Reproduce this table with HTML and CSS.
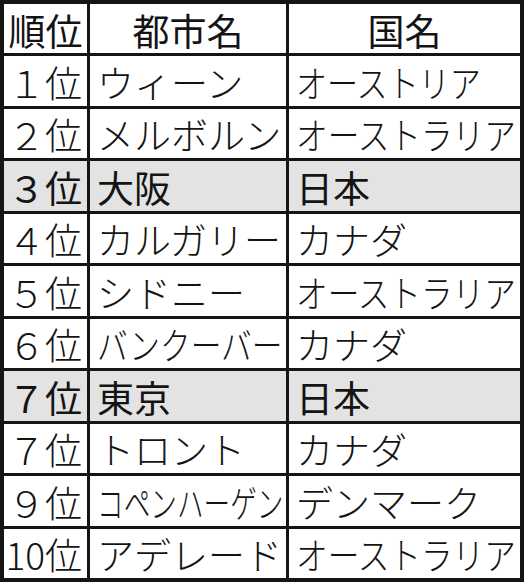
FILE: index.html
```html
<!DOCTYPE html>
<html lang="ja">
<head>
<meta charset="utf-8">
<title>都市ランキング</title>
<link rel="stylesheet" href="styles.css">
</head>
<body>
<div class="table">
  <div class="cell head rank-h">順位</div>
  <div class="cell head center">都市名</div>
  <div class="cell head center">国名</div>

  <div class="cell rank">１位</div>
  <div class="cell">ウィーン</div>
  <div class="cell"><span class="c84">オーストリア</span></div>

  <div class="cell rank">２位</div>
  <div class="cell">メルボルン</div>
  <div class="cell"><span class="c85">オーストラリア</span></div>

  <div class="cell rank hl">３位</div>
  <div class="cell hl">大阪</div>
  <div class="cell hl">日本</div>

  <div class="cell rank">４位</div>
  <div class="cell">カルガリー</div>
  <div class="cell">カナダ</div>

  <div class="cell rank">５位</div>
  <div class="cell">シドニー</div>
  <div class="cell"><span class="c85">オーストラリア</span></div>

  <div class="cell rank">６位</div>
  <div class="cell"><span class="c83">バンクーバー</span></div>
  <div class="cell">カナダ</div>

  <div class="cell rank hl">７位</div>
  <div class="cell hl">東京</div>
  <div class="cell hl">日本</div>

  <div class="cell rank">７位</div>
  <div class="cell">トロント</div>
  <div class="cell">カナダ</div>

  <div class="cell rank">９位</div>
  <div class="cell"><span class="c72">コペンハーゲン</span></div>
  <div class="cell">デンマーク</div>

  <div class="cell rank">10位</div>
  <div class="cell">アデレード</div>
  <div class="cell"><span class="c85">オーストラリア</span></div>
</div>
</body>
</html>
```
FILE: styles.css
```css
html, body {
  margin: 0;
  padding: 0;
  background: #ffffff;
}

.table {
  box-sizing: border-box;
  width: 524px;
  height: 582px;
  padding: 4px;
  background: #151515;
  display: grid;
  grid-template-columns: 83px 196px 231px;
  grid-template-rows: repeat(11, 1fr);
  column-gap: 3px;
  row-gap: 3px;
  font-family: "Noto Sans CJK JP", "Noto Sans", sans-serif;
  font-size: 37px;
  line-height: 1.2;
  color: #141414;
}

.cell {
  background: #ffffff;
  display: flex;
  align-items: center;
  padding: 2px 0 0 7px;
  white-space: nowrap;
  font-weight: 300;
  min-height: 0;
}

.head {
  font-weight: 400;
}

.center {
  justify-content: center;
  padding-left: 0;
}

.rank-h {
  justify-content: center;
  padding-left: 0;
}

.rank {
  justify-content: flex-end;
  padding-left: 0;
  padding-right: 5px;
}

.hl {
  background: #e3e3e3;
  font-weight: 400;
}

.c84, .c85, .c83, .c72 {
  display: inline-block;
  transform-origin: left center;
}

.c84 { transform: scaleX(0.84); }
.c85 { transform: scaleX(0.855); }
.c83 { transform: scaleX(0.83); }
.c72 { transform: scaleX(0.72); }
```
